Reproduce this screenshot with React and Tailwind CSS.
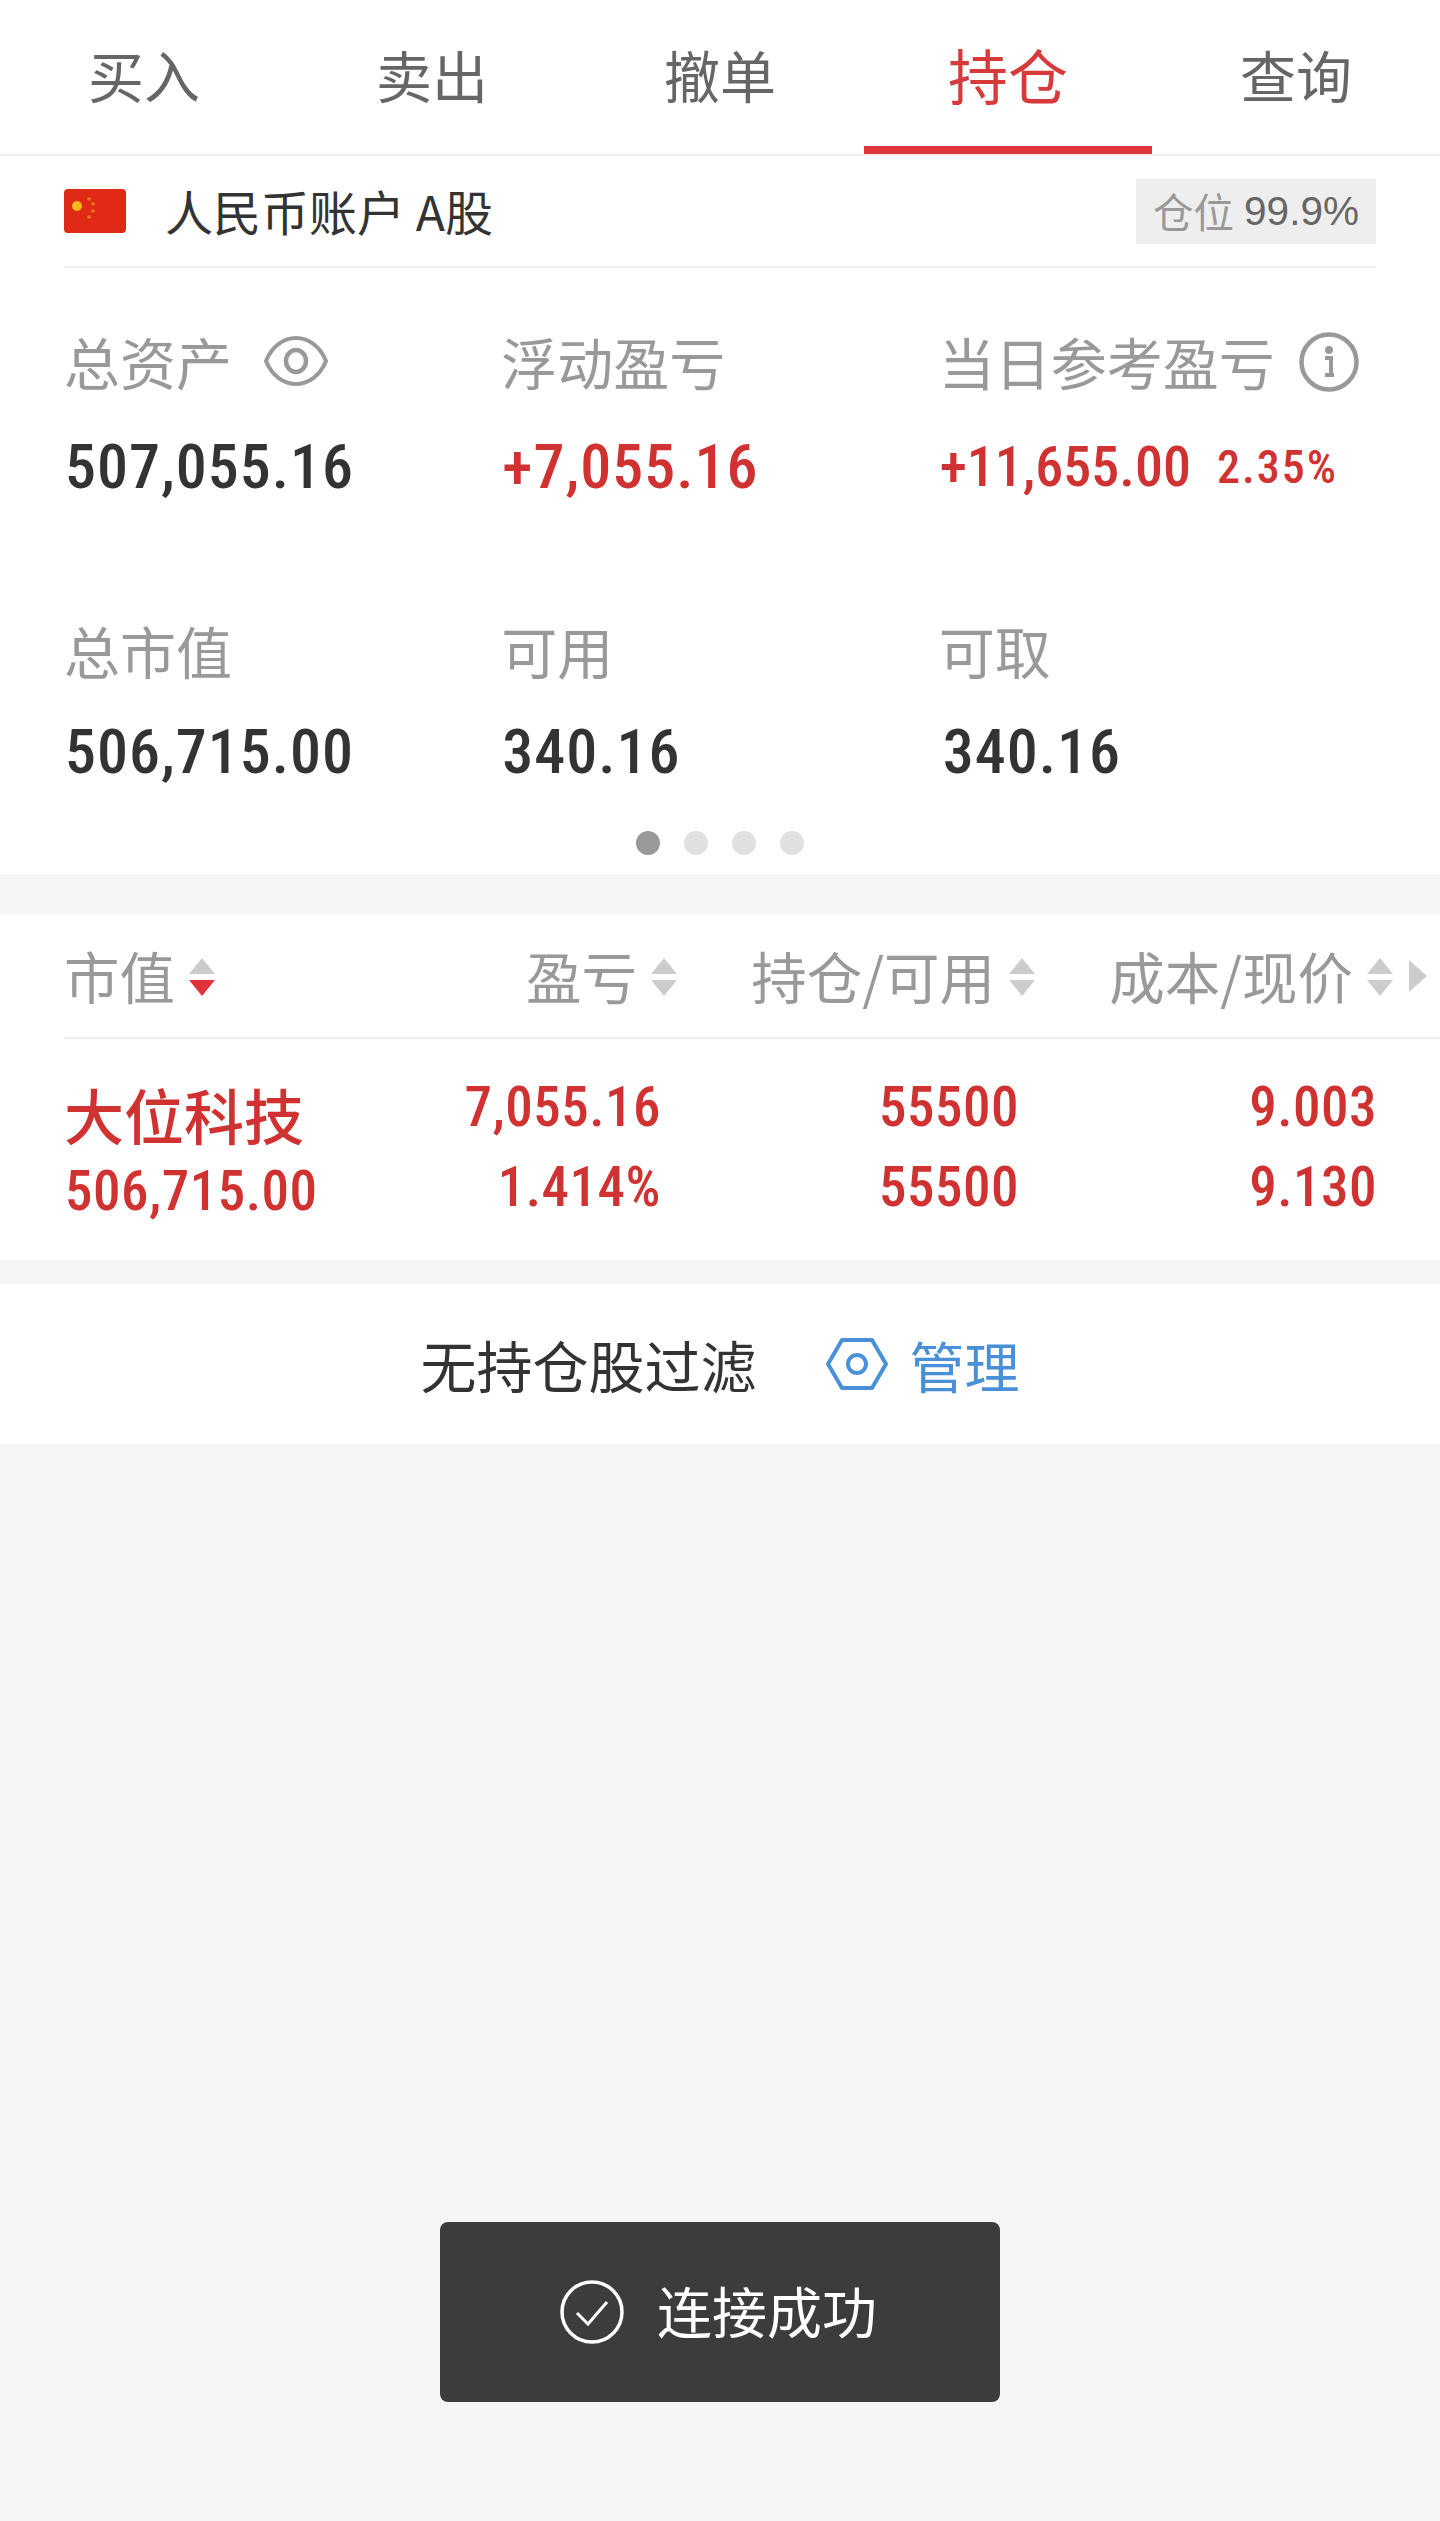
import React from 'react';

const tabs = ['买入', '卖出', '撤单', '持仓', '查询'];
const numFont = "[font-family:'Roboto',sans-serif] font-medium font-stretch-[85%]";

function SortArrows({ active }) {
    return (
        <svg width="26" height="40" viewBox="0 0 26 40" className="ml-[14px] shrink-0">
            <path d="M13 2 L26 18 L0 18 Z" fill="#cccccc" />
            <path d={'M0 24 L26 24 L13 40 Z'} fill={active ? '#e0323a' : '#cccccc'} />
        </svg>
    );
}

function EyeIcon() {
    return (
        <svg width="64" height="50" viewBox="0 0 64 50" fill="none" stroke="#999999" strokeWidth="4" className="ml-[32px]">
            <path d="M2 25 C8 10 20 2 32 2 C44 2 56 10 62 25 C56 40 44 48 32 48 C20 48 8 40 2 25 Z" />
            <ellipse cx="32" cy="25" rx="10" ry="11" strokeWidth="4.5" />
        </svg>
    );
}

function InfoIcon() {
    return (
        <svg width="60" height="60" viewBox="0 0 60 60" fill="none" className="ml-[24px] mt-[2px]">
            <circle cx="30" cy="30" r="27.5" stroke="#999999" strokeWidth="4.5" />
            <circle cx="30" cy="18" r="4" fill="#999999" />
            <path d="M26 26 H32 V42 M26 43 H35" stroke="#999999" strokeWidth="4" />
        </svg>
    );
}

function Flag() {
    return (
        <svg width="62" height="44" viewBox="0 0 62 44" className="rounded-[4px] shrink-0">
            <rect width="62" height="44" fill="#e12a16" />
            <circle cx="13" cy="17" r="5" fill="#f6b81a" />
            <circle cx="25" cy="10" r="1.8" fill="#ef7a1a" />
            <circle cx="29" cy="15" r="1.8" fill="#ef7a1a" />
            <circle cx="29" cy="22" r="1.8" fill="#ef7a1a" />
            <circle cx="25" cy="28" r="1.8" fill="#ef7a1a" />
        </svg>
    );
}

function Stat({ label, value, valueClass = 'text-[#333333]', sizeClass = 'text-[62px] tracking-[1px]', icon, gap = 'mt-[45px]', children }) {
    return (
        <div>
            <div className="flex items-center h-[60px] pb-[2px] text-[56px] leading-none text-[#999999]">
                {label}
                {icon}
            </div>
            <div className={`${gap} flex items-center h-[60px] pl-[1px] ${numFont} ${sizeClass} leading-none ${valueClass}`}>
                {value}
                {children}
            </div>
        </div>
    );
}

function HeadCell({ label, active, className = '' }) {
    return (
        <div className={`flex items-center text-[55.5px] leading-none text-[#999999] ${className}`}>
            {label}
            <SortArrows active={active} />
        </div>
    );
}

function NumCell({ top, bottom }) {
    return (
        <div className={`flex flex-col items-end pr-4 ${numFont} text-[55px] tracking-[0.5px] leading-none text-[#d03232]`}>
            <div className="h-[80px] flex items-center">{top}</div>
            <div className="h-[80px] flex items-center">{bottom}</div>
        </div>
    );
}

export default function App() {
    return (
        <div className="relative h-[2521px] bg-[#f5f5f5] [font-family:'Noto_Sans_CJK_SC',sans-serif]">
            {/* tabs */}
            <div className="flex h-[156px] bg-white border-b-2 border-[#eeeeee]">
                {tabs.map((tab, i) => (
                    <div
                        key={tab}
                        className={`relative flex-1 flex items-center justify-center pb-[6px] leading-none ${
                            i === 3 ? 'text-[60px] text-[#d63a3a]' : 'text-[56px] text-[#666666]'
                        }`}
                    >
                        {tab}
                        {i === 3 && <div className="absolute left-0 right-0 bottom-0 h-2 bg-[#e03538]" />}
                    </div>
                ))}
            </div>

            {/* account + stats */}
            <div className="bg-white h-[718px] px-16">
                <div className="flex items-center justify-between h-[112px] border-b-2 border-[#f0f0f0]">
                    <div className="flex items-center">
                        <Flag />
                        <span className="ml-[39px] pb-[2px] text-[48px] leading-none text-[#333333]">人民币账户 A股</span>
                    </div>
                    <div className="flex items-center justify-center w-[240px] h-[65px] bg-[#eeeeee] text-[40.5px] leading-none">
                        <span className="text-[#999999]">仓位</span>
                        <span className="ml-[10px] text-[#666666] [font-family:'Liberation_Sans',sans-serif]">99.9%</span>
                    </div>
                </div>

                <div className="grid grid-cols-3 pt-[64px]">
                    <Stat label="总资产" value="507,055.16" icon={<EyeIcon />} />
                    <Stat label="浮动盈亏" value="+7,055.16" valueClass="text-[#d03232]" />
                    <Stat label="当日参考盈亏" value="+11,655.00" valueClass="text-[#d03232]" sizeClass="text-[56px]" icon={<InfoIcon />}>
                        <span className="ml-[26px] text-[46px] tracking-[2px]">2.35%</span>
                    </Stat>
                </div>

                <div className="grid grid-cols-3 mt-[124px]">
                    <Stat label="总市值" value="506,715.00" gap="mt-[41px]" />
                    <Stat label="可用" value="340.16" gap="mt-[41px]" />
                    <Stat label="可取" value="340.16" gap="mt-[41px]" valueClass="text-[#333333] pl-[4px]" />
                </div>

                <div className="flex justify-center gap-6 mt-[49px]">
                    <div className="w-6 h-6 rounded-full bg-[#999999]" />
                    <div className="w-6 h-6 rounded-full bg-[#e0e0e0]" />
                    <div className="w-6 h-6 rounded-full bg-[#e0e0e0]" />
                    <div className="w-6 h-6 rounded-full bg-[#e0e0e0]" />
                </div>
            </div>

            {/* holdings table */}
            <div className="mt-[40px] bg-white h-[346px] pl-16">
                <div className="flex h-[125px] pr-1 border-b-2 border-[#f0f0f0]">
                    <div className="grid grid-cols-[255px_358px_358px_358px]">
                        <HeadCell label="市值" active />
                        <HeadCell label="盈亏" className="justify-end" />
                        <HeadCell label="持仓/可用" className="justify-end" />
                        <HeadCell label="成本/现价" className="justify-end" />
                    </div>
                    <svg width="18" height="32" viewBox="0 0 18 32" className="ml-[16px] self-center">
                        <path d="M0 0 L18 16 L0 32 Z" fill="#cccccc" />
                    </svg>
                </div>
                <div className="grid grid-cols-[255px_358px_358px_358px] pt-[28px]">
                    <div className="text-[#d03232]">
                        <div className="h-[80px] flex items-end text-[60px] font-medium leading-none pb-[3px]">大位科技</div>
                        <div className={`h-[88px] flex items-center pl-[1px] ${numFont} text-[55px] tracking-[0.5px] leading-none`}>506,715.00</div>
                    </div>
                    <NumCell top="7,055.16" bottom="1.414%" />
                    <NumCell top="55500" bottom="55500" />
                    <NumCell top="9.003" bottom="9.130" />
                </div>
            </div>

            {/* filter */}
            <div className="mt-[24px] bg-white h-[160px] flex items-center justify-center">
                <span className="text-[56px] leading-none text-[#333333]">无持仓股过滤</span>
                <svg width="62" height="54" viewBox="0 0 62 54" fill="none" stroke="#4a90d9" strokeWidth="4" className="ml-[70px]">
                    <path d="M2 27 L16 3 H46 L60 27 L46 51 H16 Z" strokeLinejoin="round" />
                    <circle cx="31" cy="27" r="9" />
                </svg>
                <span className="ml-[21px] text-[55px] leading-none text-[#4a90d9]">管理</span>
            </div>

            {/* toast */}
            <div className="absolute left-[440px] top-[2222px] w-[560px] h-[180px] rounded-lg bg-[#3c3c3c] flex items-center pl-[120px]">
                <svg width="64" height="64" viewBox="0 0 64 64" fill="none" stroke="#ffffff">
                    <circle cx="32" cy="32" r="30" strokeWidth="3.5" />
                    <path d="M17 33 L28 44 L47 22" strokeWidth="3" />
                </svg>
                <span className="ml-[33px] pb-[6px] text-[55px] leading-none text-white">连接成功</span>
            </div>
        </div>
    );
}
